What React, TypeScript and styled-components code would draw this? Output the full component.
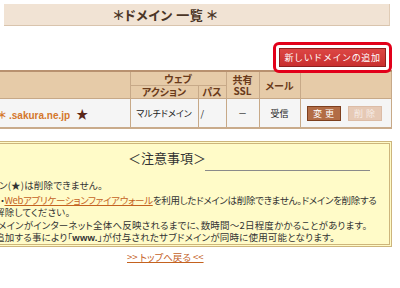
import React from "react";
import styled, { createGlobalStyle } from "styled-components";

const GlobalStyle = createGlobalStyle`
  html, body {
    margin: 0;
    padding: 0;
    background: #fff;
  }
  body {
    font-family: "Noto Sans CJK JP", "Liberation Sans", sans-serif;
    font-feature-settings: "palt";
    color: #333;
  }
`;

const Page = styled.div`
  width: 400px;
  height: 288px;
  overflow: hidden;
`;

const TitleBar = styled.h1`
  margin: 4px 10px 0 4px;
  height: 22px;
  box-sizing: border-box;
  background: #f1e3d4;
  border-bottom: 1px solid #d9c4ad;
  border-right: 1px solid #e0ccb6;
  padding-right: 62px;
  text-align: center;
  font-size: 13px;
  line-height: 22px;
  font-weight: bold;
  color: #4a3526;
  letter-spacing: 0.5px;
`;

const Toolbar = styled.div`
  display: flex;
  justify-content: flex-end;
  align-items: flex-start;
  height: 44px;
  box-sizing: border-box;
  padding: 16px 8px 0 0;
`;

// red annotation frame round the add button
const Highlight = styled.div`
  border: 3px solid #e2001a;
  border-radius: 6px;
  padding: 3px;
  position: relative;
  z-index: 1;
`;

const AddButton = styled.button`
  display: block;
  width: 107px;
  height: 19px;
  padding: 0;
  background: linear-gradient(#dc4644, #c9302f);
  border: 1px solid #8e1f1f;
  color: #fff;
  font-family: inherit;
  font-feature-settings: normal;
  font-size: 9px;
  letter-spacing: 0.6px;
  line-height: 17px;
  white-space: nowrap;
`;

const Grid = styled.table`
  width: 391px;
  border-collapse: collapse;
  table-layout: fixed;
  border-top: 2px solid #b8916f;
  border-bottom: 2px solid #c9ab8b;
`;

const Th = styled.th<{ $tall?: boolean }>`
  background: #e6cba8;
  border: 1px solid #c7a988;
  color: #6a3a1a;
  font-size: 10px;
  font-weight: bold;
  height: ${(p) => (p.$tall ? "26px" : "12px")};
  padding: 0;
  text-align: center;
  line-height: 11px;
  &:first-child {
    border-left: none;
  }
`;

const Td = styled.td<{ $align?: string }>`
  height: 28px;
  padding: 0 2px;
  border: 1px solid #c7a988;
  border-top: none;
  border-bottom: none;
  background: repeating-conic-gradient(#ededed 0 25%, #fdfdfd 0 50%) 0 0 / 2px 2px;
  font-size: 9px;
  color: #222;
  text-align: ${(p) => p.$align || "center"};
  white-space: nowrap;
  &:first-child {
    border-left: none;
  }
`;

const Domain = styled.span`
  display: inline-block;
  margin-left: -4px;
  color: #d4772c;
  font-weight: bold;
  font-size: 10px;
  font-family: "Liberation Sans", "Noto Sans CJK JP", sans-serif;
`;

const Star = styled.span`
  color: #5a2718;
  font-size: 12px;
  margin-left: 6px;
`;

const Buttons = styled.div`
  display: flex;
  gap: 7px;
  padding-left: 4px;
`;

const RowButton = styled.span<{ $disabled?: boolean }>`
  display: flex;
  align-items: center;
  justify-content: center;
  width: 34px;
  height: 15px;
  box-sizing: border-box;
  font-size: 9px;
  letter-spacing: 3px;
  text-indent: 3px;
  color: ${(p) => (p.$disabled ? "#f6ece5" : "#fff")};
  background: ${(p) => (p.$disabled ? "#e6c9b5" : "#b26c45")};
  border: 1px solid ${(p) => (p.$disabled ? "#dcbca6" : "#7d3f1e")};
`;

const Notice = styled.section`
  margin: 12px 8px 0 -10px;
  height: 106px;
  box-sizing: border-box;
  background: #fffbc8;
  border: 3px double #cdb57c;
  padding-top: 6px;
  overflow: hidden;
`;

const NoticeTitle = styled.h2`
  margin: 0 0 0 135px;
  font-size: 13px;
  font-weight: normal;
  line-height: 16px;
  color: #333;
`;

const Rule = styled.hr`
  margin: 4px 0 0 212px;
  width: 165px;
  border: none;
  border-top: 1px solid #8a8a8a;
`;

const Lines = styled.div`
  margin: 8px 0 0 7px;
  font-size: 9.5px;
  line-height: 12.5px;
  color: #333;
  white-space: nowrap;
`;

const Line = styled.div<{ $shift?: number; $gap?: number; $tight?: boolean }>`
  margin-left: ${(p) => -(p.$shift || 0)}px;
  margin-top: ${(p) => p.$gap || 0}px;
  letter-spacing: ${(p) => (p.$tight ? "-0.3px" : "0.2px")};
`;

const TextLink = styled.a`
  color: #c4621f;
  text-decoration: underline;
`;

const Strong = styled.b`
  font-family: "Liberation Sans", sans-serif;
`;

const Footer = styled.div`
  padding: 3px 0 0 127px;
  font-size: 9.5px;
`;

export default function App() {
  return (
    <Page>
      <GlobalStyle />
      <TitleBar>＊ドメイン 一覧 ＊</TitleBar>
      <Toolbar>
        <Highlight>
          <AddButton>新しいドメインの追加</AddButton>
        </Highlight>
      </Toolbar>
      <Grid>
        <colgroup>
          <col style={{ width: 130 }} />
          <col style={{ width: 68 }} />
          <col style={{ width: 28 }} />
          <col style={{ width: 33 }} />
          <col style={{ width: 41 }} />
          <col style={{ width: 91 }} />
        </colgroup>
        <thead>
          <tr>
            <Th rowSpan={2} />
            <Th colSpan={2}>ウェブ</Th>
            <Th rowSpan={2} $tall>
              共有
              <br />
              SSL
            </Th>
            <Th rowSpan={2}>メール</Th>
            <Th rowSpan={2} />
          </tr>
          <tr>
            <Th>アクション</Th>
            <Th>パス</Th>
          </tr>
        </thead>
        <tbody>
          <tr>
            <Td $align="left">
              <Domain>
                ＊ .sakura.ne.jp<Star>★</Star>
              </Domain>
            </Td>
            <Td>マルチドメイン</Td>
            <Td $align="left">/</Td>
            <Td>－</Td>
            <Td>受信</Td>
            <Td $align="left">
              <Buttons>
                <RowButton>変更</RowButton>
                <RowButton $disabled>削除</RowButton>
              </Buttons>
            </Td>
          </tr>
        </tbody>
      </Grid>
      <Notice>
        <NoticeTitle>＜注意事項＞</NoticeTitle>
        <Rule />
        <Lines>
          <Line $shift={1}>ン(★)は削除できません。</Line>
          <Line $gap={2} $tight>
            ・<TextLink>Webアプリケーションファイアウォール</TextLink>
            を利用したドメインは削除できません。ドメインを削除する
          </Line>
          <Line $shift={5}>解除してください。</Line>
          <Line $shift={2}>
            メインがインターネット全体へ反映されるまでに、数時間～2日程度かかることがあります。
          </Line>
          <Line $shift={5}>
            追加する事により「<Strong>www.</Strong>」が付与されたサブドメインが同時に使用可能となります。
          </Line>
        </Lines>
      </Notice>
      <Footer>
        <TextLink>&gt;&gt; トップへ戻る &lt;&lt;</TextLink>
      </Footer>
    </Page>
  );
}
